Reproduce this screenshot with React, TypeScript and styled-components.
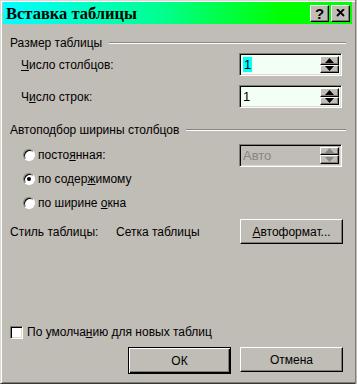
import styled, { createGlobalStyle } from "styled-components"

const Global = createGlobalStyle`
  html, body {
    margin: 0;
    padding: 0;
    background: #c0bcb6;
    overflow: hidden;
  }
  body {
    font-family: "Liberation Sans", Arial, sans-serif;
    font-size: 12px;
    color: #000;
  }
`

const Screen = styled.div`
  display: flex;
  width: 357px;
  height: 384px;
`

const Dialog = styled.div`
  width: 355px;
  height: 384px;
  box-sizing: border-box;
  background: #c0bcb6;
  border-left: 1px solid #dcd8d2;
  border-top: 1px solid #dcd8d2;
  border-bottom: 1px solid #3a3836;
  box-shadow: inset 1px 1px #fff, inset 0 -1px #7f7b76;
  padding: 1px 3px 1px 2px;
  display: flex;
  flex-direction: column;
`

const Backdrop = styled.div`
  flex: 1;
  background: #c0bcb6;
  border-left: 1px solid #7f7b76;
  background-image: linear-gradient(
    to bottom,
    transparent 55px, #000 55px, #000 70px, transparent 70px,
    transparent 125px, #000 125px, #000 140px, transparent 140px,
    transparent 205px, #000 205px, #000 250px, transparent 250px,
    transparent 320px, #000 320px, #000 345px, transparent 345px
  );
  background-size: 1px 100%;
  background-repeat: no-repeat;
  background-position: 1px 0;
`

const TitleBar = styled.div`
  height: 22px;
  background: linear-gradient(to right, #00ffff 0%, #00ff90 45%, #00ff00 80%, #00ff00 100%);
  display: flex;
  align-items: center;
  padding: 0 2px 0 3px;
`

const Title = styled.div`
  flex: 1;
  font-family: "Liberation Serif", "Times New Roman", serif;
  font-weight: bold;
  font-size: 16.5px;
  color: #000;
  padding-top: 1px;
`

const CaptionButton = styled.div<{ $gap?: number }>`
  width: 19px;
  height: 17px;
  box-sizing: border-box;
  background: #c0bcb6;
  border-top: 1px solid #fff;
  border-left: 1px solid #fff;
  border-right: 1px solid #000;
  border-bottom: 1px solid #000;
  box-shadow: inset -1px -1px #7f7b76;
  display: flex;
  align-items: center;
  justify-content: center;
  margin-left: ${(p) => p.$gap ?? 0}px;
  font-family: "Liberation Sans", Arial, sans-serif;
  font-weight: bold;
  font-size: 15px;
  line-height: 1;
`

const Body = styled.div`
  flex: 1;
  display: flex;
  flex-direction: column;
  padding: 0 6px 0 7px;
`

const Row = styled.div<{ $mt: number; $h: number; $indent?: number; $right?: number }>`
  display: flex;
  align-items: center;
  height: ${(p) => p.$h}px;
  margin-top: ${(p) => p.$mt}px;
  padding-left: ${(p) => p.$indent ?? 0}px;
  padding-right: ${(p) => p.$right ?? 0}px;
  white-space: nowrap;
`

const Label = styled.span<{ $w?: number }>`
  ${(p) => (p.$w ? `width: ${p.$w}px;` : "flex: 1;")}
`

const GroupLine = styled.div`
  flex: 1;
  height: 0;
  margin-left: 7px;
  border-top: 1px solid #8a8580;
  border-bottom: 1px solid #fff;
`

const SpinBox = styled.div<{ $disabled?: boolean }>`
  width: 103px;
  height: 23px;
  box-sizing: border-box;
  display: flex;
  border-top: 1px solid #7f7b76;
  border-left: 1px solid #7f7b76;
  border-right: 1px solid #fff;
  border-bottom: 1px solid #fff;
  box-shadow: inset 1px 1px #000, inset -1px -1px #dcd8d2;
  padding: 2px;
  background: ${(p) => (p.$disabled ? "#c0bcb6" : "#f4fff4")};
`

const SpinText = styled.div<{ $disabled?: boolean }>`
  flex: 1;
  display: flex;
  align-items: center;
  padding-left: 1px;
  font-size: 13px;
  color: ${(p) => (p.$disabled ? "#8a8580" : "#000")};
`

const Selected = styled.span`
  background: #00ffff;
  padding: 0 1px;
  line-height: 15px;
`

const SpinButtons = styled.div`
  width: 19px;
  display: flex;
  flex-direction: column;
`

const SpinButton = styled.div<{ $disabled?: boolean }>`
  flex: 1;
  box-sizing: border-box;
  background: #c0bcb6;
  border-top: 1px solid #fff;
  border-left: 1px solid #fff;
  border-right: 1px solid #000;
  border-bottom: 1px solid #000;
  box-shadow: inset -1px -1px #7f7b76;
  display: flex;
  align-items: center;
  justify-content: center;
  color: ${(p) => (p.$disabled ? "#8a8580" : "#000")};
`

const Radio = styled.span<{ $on?: boolean }>`
  width: 12px;
  height: 12px;
  box-sizing: border-box;
  border-radius: 50%;
  background: #fff;
  border: 1px solid #7f7b76;
  border-right-color: #fff;
  border-bottom-color: #fff;
  box-shadow: inset 1px 1px #000;
  margin-right: 3px;
  display: flex;
  align-items: center;
  justify-content: center;
  &::after {
    content: "";
    width: 4px;
    height: 4px;
    border-radius: 50%;
    background: ${(p) => (p.$on ? "#000" : "transparent")};
  }
`

const Checkbox = styled.span`
  width: 13px;
  height: 13px;
  box-sizing: border-box;
  background: #fff;
  border: 1px solid #7f7b76;
  border-right-color: #fff;
  border-bottom-color: #fff;
  box-shadow: inset 1px 1px #000, inset -1px -1px #dcd8d2;
  margin-right: 4px;
`

const Button = styled.div<{ $default?: boolean }>`
  width: 103px;
  height: ${(p) => (p.$default ? 27 : 25)}px;
  box-sizing: border-box;
  background: #c0bcb6;
  display: flex;
  align-items: center;
  justify-content: center;
  border-top: 1px solid #fff;
  border-left: 1px solid #fff;
  border-right: 1px solid #000;
  border-bottom: 1px solid #000;
  box-shadow: inset -1px -1px #7f7b76;
  ${(p) =>
    p.$default &&
    `border-top-color: #000; border-left-color: #000;
     box-shadow: inset 1px 1px #fff, inset -1px -1px #000, inset -2px -2px #7f7b76;`}
`

const ButtonRow = styled.div`
  display: flex;
  justify-content: flex-end;
  gap: 9px;
  margin-top: 8px;
  margin-bottom: 8px;
  padding-right: 3px;
`

const Spacer = styled.div`
  flex: 1;
`

const U = styled.u`
  text-decoration: underline;
  text-underline-offset: 1px;
`

const Arrow = ({ up }: { up?: boolean }) => (
  <svg width="9" height="5" viewBox="0 0 9 5">
    <path d={up ? "M4.5 0 L9 5 L0 5 Z" : "M0 0 L9 0 L4.5 5 Z"} fill="currentColor" />
  </svg>
)

const Spin = ({ value, disabled, selected }: { value: string; disabled?: boolean; selected?: boolean }) => (
  <SpinBox $disabled={disabled}>
    <SpinText $disabled={disabled}>{selected ? <Selected>{value}</Selected> : value}</SpinText>
    <SpinButtons>
      <SpinButton $disabled={disabled}>
        <Arrow up />
      </SpinButton>
      <SpinButton $disabled={disabled}>
        <Arrow />
      </SpinButton>
    </SpinButtons>
  </SpinBox>
)

export default function App() {
  return (
    <>
      <Global />
      <Screen>
        <Dialog>
          <TitleBar>
            <Title>Вставка таблицы</Title>
            <CaptionButton>?</CaptionButton>
            <CaptionButton $gap={2}>
              <svg width="9" height="8" viewBox="0 0 9 8">
                <path d="M1 0 L8 7 M8 0 L1 7" stroke="#000" strokeWidth="1.8" />
              </svg>
            </CaptionButton>
          </TitleBar>
          <Body>
            <Row $mt={12} $h={14}>
              <span>Размер таблицы</span>
              <GroupLine />
            </Row>
            <Row $mt={3} $h={23} $indent={11} $right={4}>
              <Label>
                <U>Ч</U>исло столбцов:
              </Label>
              <Spin value="1" selected />
            </Row>
            <Row $mt={9} $h={23} $indent={11} $right={4}>
              <Label>
                Ч<U>и</U>сло строк:
              </Label>
              <Spin value="1" />
            </Row>
            <Row $mt={15} $h={14}>
              <span>Автоподбор ширины столбцов</span>
              <GroupLine />
            </Row>
            <Row $mt={6} $h={24} $indent={13} $right={4}>
              <Radio />
              <Label>
                посто<U>я</U>нная:
              </Label>
              <Spin value="Авто" disabled />
            </Row>
            <Row $mt={0} $h={24} $indent={13}>
              <Radio $on />
              <span>
                по содер<U>ж</U>имому
              </span>
            </Row>
            <Row $mt={0} $h={24} $indent={13}>
              <Radio />
              <span>
                по ширине <U>о</U>кна
              </span>
            </Row>
            <Row $mt={4} $h={25} $right={3}>
              <Label $w={106}>Стиль таблицы:</Label>
              <Label>Сетка таблицы</Label>
              <Button>
                <span>
                  <U>А</U>втоформат...
                </span>
              </Button>
            </Row>
            <Spacer />
            <Row $mt={0} $h={14}>
              <Checkbox />
              <span>
                По умолча<U>н</U>ию для новых таблиц
              </span>
            </Row>
            <ButtonRow>
              <Button $default>ОК</Button>
              <Button>Отмена</Button>
            </ButtonRow>
          </Body>
        </Dialog>
        <Backdrop />
      </Screen>
    </>
  )
}
